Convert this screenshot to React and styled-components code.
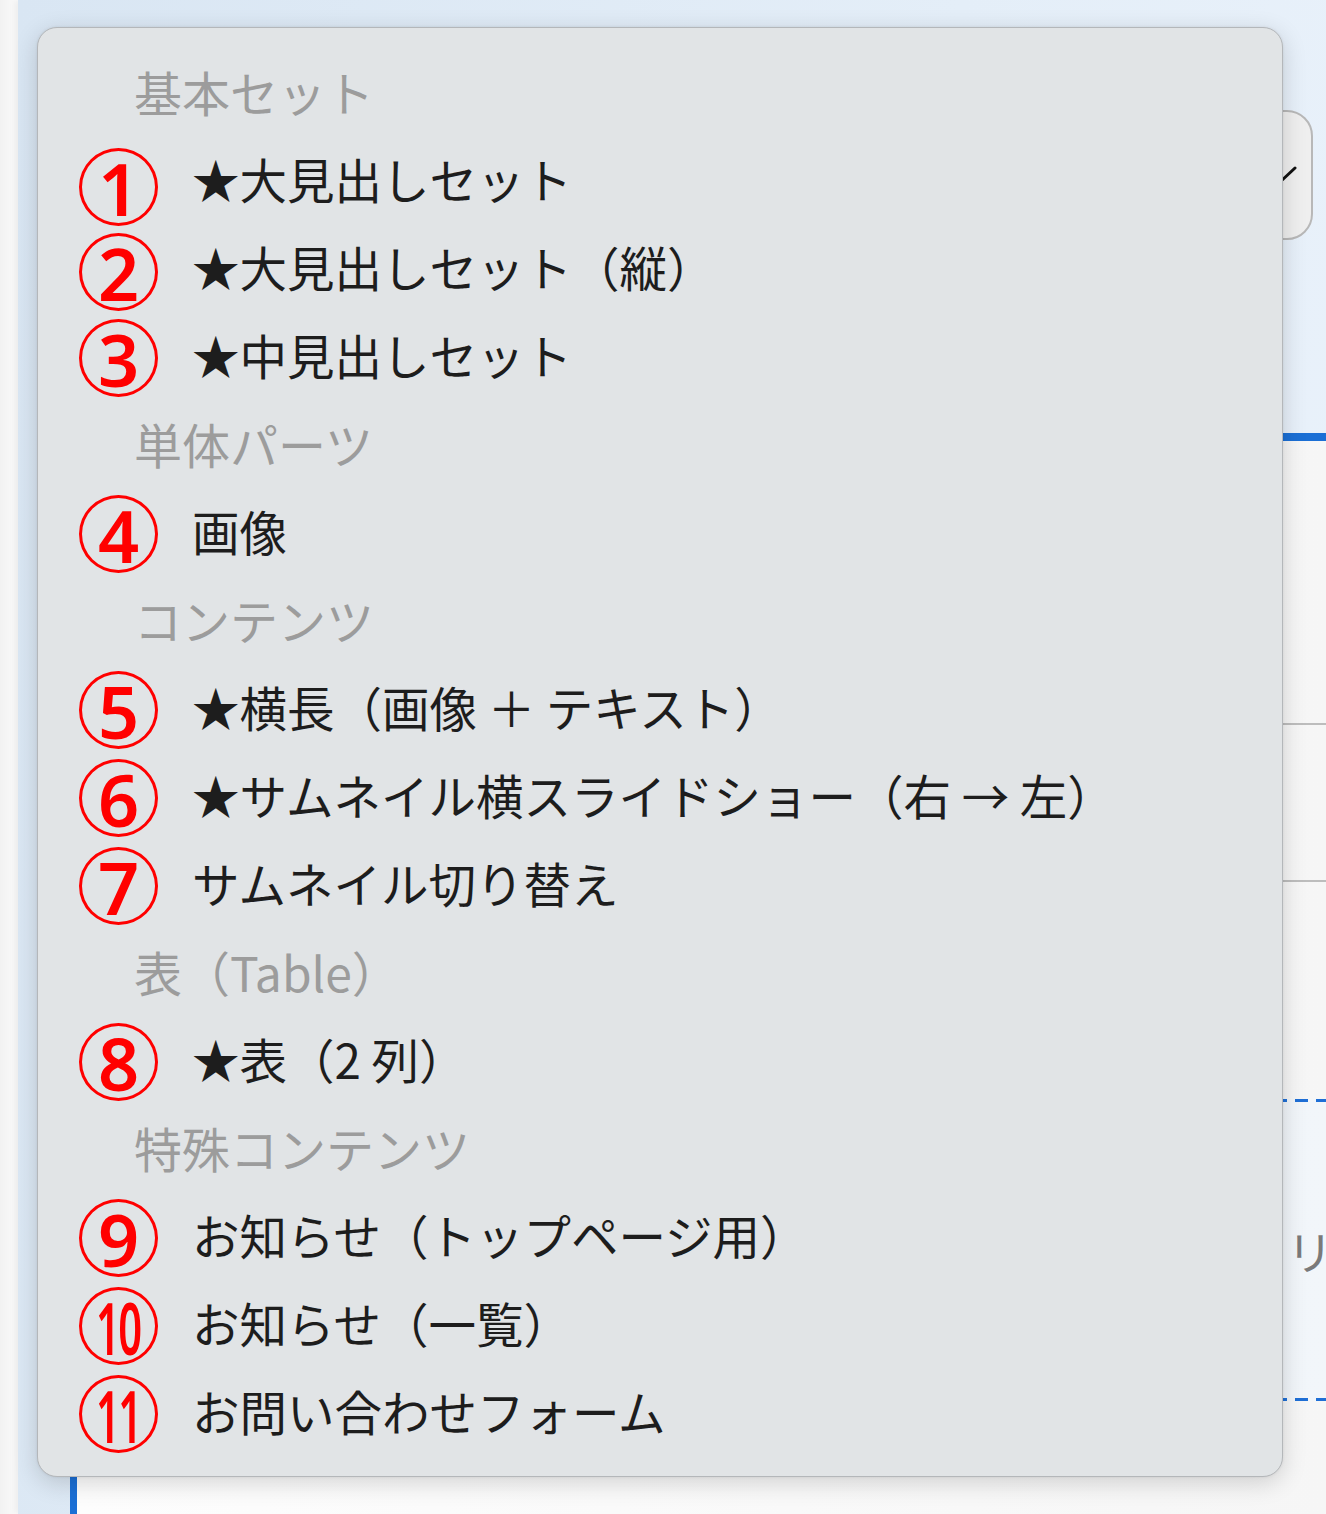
import React from 'react';
import styled, { createGlobalStyle } from 'styled-components';

const GlobalStyle = createGlobalStyle`
  html, body {
    margin: 0;
    padding: 0;
    background: #fafafa;
  }
  body {
    font-family: "Noto Sans CJK JP", "Noto Sans", sans-serif;
  }
`;

const Page = styled.div`
  position: relative;
  width: 1326px;
  height: 1514px;
  overflow: hidden;
  padding-left: 18px;
  box-sizing: border-box;
  background: linear-gradient(to right, #f2f2f2, #fbfbfb 18px);
`;

const Workspace = styled.div`
  height: 100%;
  display: flex;
  flex-direction: column;
  background: linear-gradient(100deg, #d9e6f3 0%, #e4eef8 60%, #eaf2fb 100%);
  box-shadow: -3px 0 6px rgba(0, 0, 0, 0.06);
`;

const TopBar = styled.div`
  height: 433px;
  flex-shrink: 0;
  display: flex;
  justify-content: flex-end;
  align-items: flex-start;
  padding: 110px 13px 0 0;
  box-sizing: border-box;
`;

const SelectBox = styled.div`
  width: 320px;
  height: 130px;
  box-sizing: border-box;
  border: 2px solid #b8b8b8;
  border-radius: 26px;
  background: #efefef;
  display: flex;
  align-items: center;
  justify-content: flex-end;
  padding-right: 14px;
`;

const Block = styled.div`
  flex: 1;
  margin-left: 52px;
  border-top: 8px solid #1b6fd5;
  border-left: 7px solid #1b6fd5;
  background: linear-gradient(to right, #fdfdfd, #f6f6f6);
  display: flex;
  flex-direction: column;
`;

const BlockRow = styled.div`
  height: ${p => p.h}px;
  flex-shrink: 0;
  border-bottom: ${p => (p.line ? '2px solid #bdbdbd' : 'none')};
`;

const dash = 'repeating-linear-gradient(to right, #1f6fd6 0 13px, transparent 13px 21px)';

const DropZone = styled.div`
  height: 302px;
  flex-shrink: 0;
  box-sizing: border-box;
  background:
    ${dash} top / 100% 3px no-repeat,
    ${dash} bottom / 100% 3px no-repeat,
    linear-gradient(to right, #e3edf7, #f2f6fa);
  display: flex;
  align-items: center;
  padding-left: 1164px;
`;

const Hint = styled.span`
  font-size: 46px;
  color: #7a7a7a;
  white-space: nowrap;
`;

const Menu = styled.div`
  position: absolute;
  left: 37px;
  top: 27px;
  width: 1246px;
  box-sizing: border-box;
  padding: 22px 0 18px;
  background: #e1e4e6;
  border: 1px solid #b4b7ba;
  border-radius: 20px;
  box-shadow: 0 6px 24px rgba(0, 0, 0, 0.16), 0 0 3px rgba(0, 0, 0, 0.08);
  display: flex;
  flex-direction: column;
`;

const GroupLabel = styled.div`
  height: 88px;
  display: flex;
  align-items: center;
  padding-left: 96px;
  font-size: 48px;
  color: #9c9c9c;
  white-space: nowrap;
`;

const Item = styled.div`
  height: 88px;
  display: flex;
  align-items: center;
  padding-left: 41px;
  gap: 34px;
  font-size: 47.5px;
  color: #1d1d1d;
  white-space: nowrap;
`;

const Label = styled.span`
  margin-top: -7px;
`;

const Badge = styled.span`
  width: 79px;
  height: 78px;
  flex-shrink: 0;
  box-sizing: border-box;
  border: 3px solid #ff0000;
  border-radius: 50%;
  display: flex;
  align-items: center;
  justify-content: center;
  transform: translateY(${p => p.dy || 0}px);
  color: #ff0000;
  font-family: "Noto Sans", "Liberation Sans", sans-serif;
  font-weight: 600;
  font-size: 72px;
  line-height: 1;
`;

const Digits = styled.span`
  display: inline-block;
  transform: scaleX(${p => (p.narrow ? 0.58 : 1)});
  letter-spacing: ${p => (p.narrow ? '-3px' : '0')};
  margin-top: 2px;
`;

const Chevron = () => (
  <svg width="36" height="20" viewBox="0 0 36 20">
    <polyline points="2,3 18,18 34,3" fill="none" stroke="#111" strokeWidth="3" strokeLinecap="round" strokeLinejoin="round" />
  </svg>
);

const menu = [
  { label: '基本セット' },
  { n: '1', text: '★大見出しセット', dy: 5 },
  { n: '2', text: '★大見出しセット（縦）', dy: 2 },
  { n: '3', text: '★中見出しセット' },
  { label: '単体パーツ' },
  { n: '4', text: '画像' },
  { label: 'コンテンツ' },
  { n: '5', text: '★横長（画像 ＋ テキスト）' },
  { n: '6', text: '★サムネイル横スライドショー（右 → 左）' },
  { n: '7', text: 'サムネイル切り替え' },
  { label: '表（Table）' },
  { n: '8', text: '★表（2 列）' },
  { label: '特殊コンテンツ' },
  { n: '9', text: 'お知らせ（トップページ用）' },
  { n: '10', text: 'お知らせ（一覧）' },
  { n: '11', text: 'お問い合わせフォーム' },
];

export default function App() {
  return (
    <>
      <GlobalStyle />
      <Page>
        <Workspace>
          <TopBar>
            <SelectBox>
              <Chevron />
            </SelectBox>
          </TopBar>
          <Block>
            <BlockRow h={282} line />
            <BlockRow h={155} line />
            <BlockRow h={217} />
            <DropZone>
              <Hint>クリックして追加</Hint>
            </DropZone>
          </Block>
        </Workspace>
        <Menu>
          {menu.map((m, i) =>
            m.label ? (
              <GroupLabel key={i}>
                <Label>{m.label}</Label>
              </GroupLabel>
            ) : (
              <Item key={i}>
                <Badge dy={m.dy}>
                  <Digits narrow={m.n.length > 1}>{m.n}</Digits>
                </Badge>
                <Label>{m.text}</Label>
              </Item>
            )
          )}
        </Menu>
      </Page>
    </>
  );
}
